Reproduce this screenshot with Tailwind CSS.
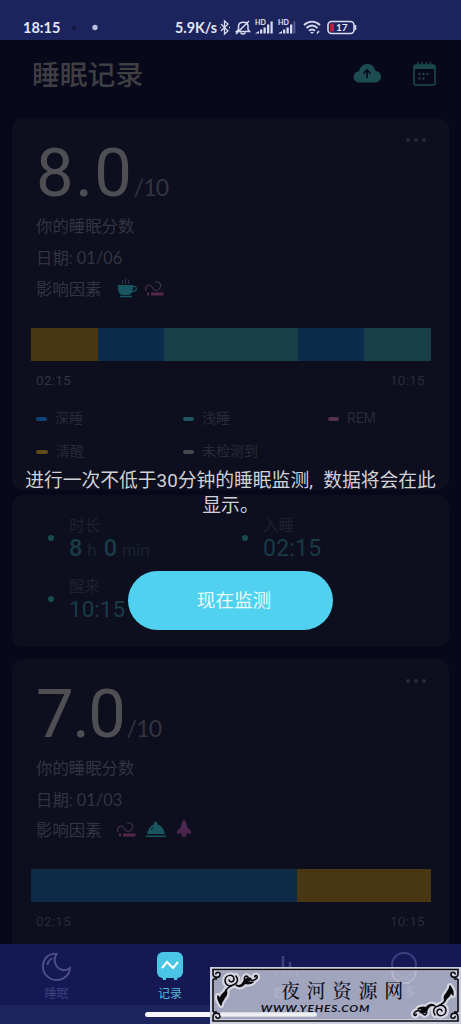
<!DOCTYPE html>
<html lang="zh-CN">
<head>
<meta charset="utf-8">
<title>睡眠记录</title>
<script src="https://cdn.jsdelivr.net/npm/@tailwindcss/browser@4"></script>
</head>
<body class="bg-[#07081a]">
<svg class="hidden">
  <defs>
    <symbol id="smoke" viewBox="0 0 20 18"><path d="M1 12C-1 7 5 4 7 8s6 5 8 1-1-7-5-6" fill="none" stroke="#40304a" stroke-width="1.2"/><path d="M6 13.5h12.500v3H6zM2 13.500h2v3H2z" fill="#55284a"/></symbol>
  </defs>
</svg>
<div class="relative flex h-[1024px] w-[461px] flex-col overflow-hidden font-['Roboto','Noto_Sans_CJK_SC',sans-serif] text-[#34343f]">

  <header class="flex h-[40px] shrink-0 items-start bg-[#1c245e] pt-[19px] pl-[23px] font-['Lato',sans-serif] font-bold text-[#e4e5f6]">
    <span class="w-[47px] text-[14.5px] leading-[18px] whitespace-nowrap">18:15</span>
    <svg class="h-[18px] w-[30px]" viewBox="0 0 30 18"><path d="M1 10.500h6L4 6z" fill="#10133c"/><circle cx="25" cy="8.500" r="2.700" fill="#b9bddc"/></svg>
    <span class="ml-[75px] w-[43px] text-[14.3px] leading-[18px] whitespace-nowrap">5.9K/s</span>
    <svg class="ml-[1px] h-[18px] w-[12px]" viewBox="0 0 12 18" fill="none" stroke="#d8daf0" stroke-width="1.300"><path d="M2 5l7 7-3.500 3V2L9 5l-7 7M1 8.500h.8M10 8.500h1"/></svg>
    <svg class="ml-[4px] h-[18px] w-[16px]" viewBox="0 0 16 18" fill="none" stroke="#d8daf0" stroke-width="1.500"><path d="M1.500 12.500h13L13 10.500V7c0-5-9-5-9.500 0v3.500zM6 13.500c0 2 4 2 4 0M1 15L14 2"/></svg>
    <div class="ml-[4px] flex h-[18px] w-[19px] flex-col"><span class="h-[6px] text-[7px] leading-[6px]">HD</span><svg class="-mt-[6px] h-[20px] w-[20px] shrink-0" viewBox="0 0 20 20" fill="#d8daf0"><path d="M0 14.500h4V12zM5 14.500h2.300v-4H5zM8.500 14.500h2.300v-6H8.500zM12 14.500h2.300v-9H12zM15.500 14.500h2.200V2.500h-2.200z"/></svg></div>
    <div class="ml-[4px] flex h-[18px] w-[19px] flex-col"><span class="h-[6px] text-[7px] leading-[6px]">HD</span><svg class="-mt-[6px] h-[20px] w-[20px] shrink-0" viewBox="0 0 20 20" fill="#d8daf0"><path d="M0 14.500h4V12zM5 14.500h2.300v-4H5zM8.500 14.500h2.300v-6H8.500zM12 14.500h2.300v-9H12z"/><path d="M15.500 14.500h1.800V2.500h-1.800z" fill="#5a6095"/></svg></div>
    <svg class="ml-[6px] h-[18px] w-[19px]" viewBox="0 0 19 18" fill="none" stroke="#d8daf0" stroke-width="2"><path d="M1 6c5-4.500 11-4.500 16 0M3.500 9c3.500-3.200 7.500-3.200 11 0M6 11.800c2-1.800 4-1.800 6 0"/><path d="M7 13l2 2 2-2z" fill="#d8daf0" stroke="none"/><path d="M14 14.500l2-2.500" stroke-width="1.500"/></svg>
    <svg class="ml-[5px] h-[18px] w-[31px]" viewBox="0 0 31 18"><rect x="1" y="2.500" width="26" height="12" rx="3.500" fill="none" stroke="#d8daf0" stroke-width="1.600"/><path d="M3 4.500h4v8H3z" fill="#b81c40"/><path d="M28.500 6v5" stroke="#d8daf0" stroke-width="1.500"/><text x="9" y="12" font-size="10" fill="#e4e5f6">17</text></svg>
  </header>

  <main class="flex h-[904px] shrink-0 flex-col px-[12px]">
    <div class="flex h-[78px] shrink-0 items-start pl-[20px]">
      <h1 class="mt-[17px] w-[321px] text-[27.8px] leading-[38px] font-medium whitespace-nowrap text-[#3e3e43]">睡眠记录</h1>
      <svg class="mt-[23px] h-[20px] w-[28px]" viewBox="0 0 28 20"><path d="M6.500 19.500C1 19.500-.5 14 1.500 11 2.500 9 4.500 8.500 6 8.500 7 3.500 10 1 14.500 1s7 3 8 7c4 .5 5.500 3 5.500 6s-2.500 5.500-6 5.500z" fill="#1c4b52"/><path d="M14 15V7M10.500 10.500L14 7l3.500 3.500" fill="none" stroke="#07081a" stroke-width="1.700"/></svg>
      <svg class="mt-[21px] ml-[31px] h-[26px] w-[25px]" viewBox="0 0 25 26"><rect x="2" y="4" width="21" height="20" rx="2" fill="none" stroke="#1c474f" stroke-width="1.600"/><path d="M2 4h21v4H2z" fill="#1c474f"/><path d="M6 1v4M10.200 1v4M14.400 1v4M18.500 1v4" stroke="#1c474f" stroke-width="1.400"/><path d="M6.500 13h12M6.500 17.500h8" stroke="#1c474f" stroke-width="2" stroke-dasharray="2 2"/></svg>
    </div>

    <section class="flex h-[372px] shrink-0 flex-col rounded-[10px] bg-[#0d0e1e] px-[19px]">
      <div class="flex h-[90px] justify-between">
        <div class="flex items-baseline pt-[17px] pl-[5px] leading-[76px]"><span class="text-[67px] leading-[76px] tracking-[1.5px] text-[#4f4f53]">8.0</span><span class="font-['Lato'] text-[23px] tracking-[-0.700px]">/10</span></div>
        <div class="mt-[20px] mr-[4px] flex gap-[4px]"><i class="size-[4px] rounded-full bg-[#292a37]"></i><i class="size-[4px] rounded-full bg-[#292a37]"></i><i class="size-[4px] rounded-full bg-[#292a37]"></i></div>
      </div>
      <div class="flex h-[120px] flex-col pl-[5px] text-[16.4px] leading-[31px]">
        <span class="mt-[3px] h-[31px]">你的睡眠分数</span>
        <span class="h-[32px]">日期: <span class="font-['Lato']">01/06</span></span>
        <div class="flex"><span class="w-[81px]">影响因素</span>
          <svg class="mt-[4px] h-[20px] w-[21px]" viewBox="0 0 21 20"><path d="M1 7h15v4c0 3-2 5-4 6H5c-3-1-4-4-4-6z" fill="#185761"/><path d="M16 8.500c5-1 4 6-1 5M3 18.500h12" fill="none" stroke="#185761" stroke-width="1.300"/><path d="M5.500 6c-1-2 1-2 0-4M8.500 5.500c-1-2 1-3 0-5M11.500 6c-1-2 1-2 0-4" stroke="#30405a" fill="none"/></svg>
          <svg class="mt-[5px] ml-[7px] h-[18px] w-[20px]"><use href="#smoke"/></svg></div>
      </div>
      <div class="flex h-[33px] w-[400px]"><i class="w-[66.500px] bg-[#493714]"></i><i class="w-[66.500px] bg-[#0c2c4b]"></i><i class="w-[133.500px] bg-[#183e48]"></i><i class="w-[66.500px] bg-[#0c2c4b]"></i><i class="grow bg-[#183e48]"></i></div>
      <div class="flex h-[41px] justify-between pt-[9px] pr-[5px] pl-[5px] text-[13.5px] leading-[20px] tracking-[0.3px]"><span>02:15</span><span class="text-[#292a37]">10:15</span></div>
      <div class="grid grid-cols-[147px_145px_1fr] grid-rows-[33px_33px] pl-[5px] text-[14px] leading-[33px] text-[#292a37]">
        <div class="flex items-center"><i class="mr-[8px] h-[4px] w-[11px] rounded-full bg-[#104474]"></i>深睡</div>
        <div class="flex items-center"><i class="mr-[8px] h-[4px] w-[11px] rounded-full bg-[#1c565f]"></i>浅睡</div>
        <div class="flex items-center"><i class="mr-[8px] h-[4px] w-[11px] rounded-full bg-[#51334b]"></i>REM</div>
        <div class="flex items-center"><i class="mr-[8px] h-[4px] w-[12px] rounded-full bg-[#624b18]"></i>清醒</div>
        <div class="flex items-center"><i class="mr-[8px] h-[4px] w-[11px] rounded-full bg-[#46484f]"></i>未检测到</div>
      </div>
    </section>

    <section class="mt-[5px] grid h-[152px] shrink-0 grid-cols-[194px_1fr] grid-rows-[61px_61px] rounded-[10px] bg-[#0d0e1e] pt-[19px] pl-[36px] text-[#183b46]">
      <div class="flex"><i class="mt-[21px] mr-[15px] size-[6px] rounded-full bg-[#184c50]"></i><div class="flex flex-col"><span class="mt-[1px] text-[15.5px] leading-[22px] text-[#202130]">时长</span><span class="flex items-baseline gap-[5px] leading-[23px]"><b class="text-[23.5px] font-medium">8</b><span class="font-['Lato'] text-[17px] text-[#19232f]">h</span><b class="ml-[2px] text-[23.5px] font-medium">0</b><span class="font-['Lato'] text-[17px] text-[#19232f]">min</span></span></div></div>
      <div class="flex"><i class="mt-[21px] mr-[15px] size-[6px] rounded-full bg-[#184c50]"></i><div class="flex flex-col"><span class="mt-[1px] text-[15.5px] leading-[22px] text-[#202130]">入睡</span><span class="text-[23px] leading-[24px] tracking-[0.2px]">02:15</span></div></div>
      <div class="flex"><i class="mt-[21px] mr-[15px] size-[6px] rounded-full bg-[#184c50]"></i><div class="flex flex-col"><span class="mt-[1px] text-[15.5px] leading-[22px] text-[#202130]">醒来</span><span class="text-[22.5px] leading-[22px]">10:15</span></div></div>
    </section>

    <section class="mt-[12px] flex h-[285px] shrink-0 flex-col rounded-t-[10px] bg-[#0d0e1e] px-[19px]">
      <div class="flex h-[90px] justify-between">
        <div class="flex items-baseline pt-[17px] pl-[5px] leading-[76px]"><span class="text-[67px] leading-[76px] tracking-[-1.5px] text-[#4f4f53]">7.0</span><span class="ml-[2px] font-['Lato'] text-[23px] tracking-[-0.700px]">/10</span></div>
        <div class="mt-[20px] mr-[4px] flex gap-[4px]"><i class="size-[4px] rounded-full bg-[#292a37]"></i><i class="size-[4px] rounded-full bg-[#292a37]"></i><i class="size-[4px] rounded-full bg-[#292a37]"></i></div>
      </div>
      <div class="flex h-[120px] flex-col pl-[5px] text-[16.4px] leading-[31px]">
        <span class="mt-[4px] h-[31px]">你的睡眠分数</span>
        <span class="h-[31px]">日期: <span class="font-['Lato']">01/03</span></span>
        <div class="flex"><span class="w-[81px]">影响因素</span>
          <svg class="mt-[5px] h-[18px] w-[20px]"><use href="#smoke"/></svg>
          <svg class="mt-[4px] ml-[9px] h-[19px] w-[20px]" viewBox="0 0 20 19"><path d="M1 15C2 10 5 6 8 5.500c-1-4 4-4 3.500 0C15 6 18 10 19 15zM0 16.500h20V18H0z" fill="#18555e"/><path d="M5 11l2-2.500" stroke="#0d0e1e"/></svg>
          <svg class="mt-[4px] ml-[10px] h-[20px] w-[16px]" viewBox="0 0 16 20"><path d="M8 0c2 2 3 5 3 8l4 4v3l-4-1-.5 1L10 19l-2-2-2 2-.5-4-.5-1-4 1v-3l4-4C5 5 6 2 8 0z" fill="#4b264c"/></svg></div>
      </div>
      <div class="flex h-[33px] w-[400px]"><i class="w-[266px] bg-[#0e2c47]"></i><i class="grow bg-[#493714]"></i></div>
      <div class="flex justify-between pt-[9px] pr-[5px] pl-[5px] text-[13.5px] leading-[20px] tracking-[0.3px] text-[#292a37]"><span>02:15</span><span>10:15</span></div>
    </section>
  </main>

  <nav class="grid h-[61px] shrink-0 grid-cols-[113px_114px_120px_114px] bg-[#141853] text-[12px] leading-[18px] text-[#3c4080]">
    <div class="flex flex-col items-center pt-[8px]"><svg class="h-[30px] w-[30px]" viewBox="0 0 30 30" fill="none" stroke="#4e5187" stroke-width="1.900"><path d="M14.500 2C5 1 1 8 1 15c0 7 6 13 14 13 7 0 13-6 13-12-5 4-11 2-13.500-2S12 6 14.500 2zM5.500 13c.5-4 3-6 5-7"/></svg><span class="mt-[3px]">睡眠</span></div>
    <div class="flex flex-col items-center pt-[7px] text-[#55b7dc]"><svg class="h-[31px] w-[28px]" viewBox="0 0 28 31"><rect x="1" y="1" width="26" height="26" rx="6" fill="#4bc5e5"/><path d="M6 25h4v4H7zM18 25h4l-1 4h-3z" fill="#4bc5e5"/><path d="M6 17l5-6 6 6 5-6" fill="none" stroke="#fff" stroke-width="2"/></svg><span class="mt-[3px]">记录</span></div>
    <div class="flex flex-col items-center pt-[9px]"><svg class="h-[28px] w-[28px]" viewBox="0 0 28 28"><path d="M3 24v-8M10 24V3M17 24V9M24 24v-9" stroke="#3c4080" stroke-width="2.500"/></svg><span class="mt-[3px] mr-[4px] text-[#8f92c8]">趋势</span></div>
    <div class="flex flex-col items-center pt-[7px]"><svg class="h-[30px] w-[30px]" viewBox="0 0 30 30" fill="none" stroke="#3c4080" stroke-width="2"><circle cx="15" cy="14" r="12"/><path d="M9 28h12"/></svg><span class="mt-[3px] text-[#8f92c8]">更多</span></div>
  </nav>
  <footer class="flex h-[19px] shrink-0 justify-center bg-[#1c245e] pt-[7px]"><i class="h-[5px] w-[171px] rounded-full bg-[#f5f5fa]"></i></footer>

  <div class="absolute top-[469px] left-0 flex w-full flex-col items-center text-[#d1d1d7]">
    <p class="text-center text-[18.8px] leading-[25px] whitespace-nowrap">进行一次不低于30分钟的睡眠监测<span class="inline-block w-[14px] text-left">,</span>数据将会在此<br>显示。</p>
    <button class="mt-[52px] h-[59px] w-[205px] rounded-full bg-[#4fd1ef] pt-[3px] pl-[7px] text-[18.6px] text-[#e9fcff]">现在监测</button>
  </div>

  <aside class="absolute top-[967px] left-[210px] h-[57px] w-[251px] text-[#101018]">
    <svg class="absolute inset-0" width="251" height="57" viewBox="0 0 251 57">
      <defs>
        <g id="scroll" stroke-linecap="round" stroke-linejoin="round">
          <path d="M11 38c-1-3-4-4-3-9 1 2 2 2 3 1 0-3 4-3 5-7 2 5-1 7-2 8 0 2-3 3-3 7zM26 18c4 2 7-1 8-4 2-3 5-4 7-2-1 2-3 2-4 2 2 2 4 1 6 1-2 2-6 2-8 1-2 3-6 5-9 2z"/>
          <path d="M19 13c1 3 5 2 5-1 0-5-8-5-9 1 0 5 4 7 8 5 4-1 6-5 3-9M23 18c-3 2-6 2-7 6M41 13c4 1 7-2 6-4-1-1-3 0-2 1M35 14c-2-4 1-6 3-4" fill="none"/>
        </g>
      </defs>
      <path fill-rule="evenodd" d="M0 0h251v57H0zM10 4v5H4v37h6v6h231v-6h6V9h-6V4z" fill="#cccddd"/>
      <path d="M10 4h231v5h6v37h-6v6H10v-6H4V9h6z" fill="#b5b7cc" fill-opacity=".88"/>
      <use href="#scroll" fill="#d5d6e1" stroke="#d5d6e1" stroke-width="6"/><use href="#scroll" fill="#08080c" stroke="#08080c" stroke-width="1.500"/>
      <g transform="rotate(180 125.500 28.500)"><use href="#scroll" fill="#d5d6e1" stroke="#d5d6e1" stroke-width="6"/><use href="#scroll" fill="#08080c" stroke="#08080c" stroke-width="1.500"/></g>
      <path d="M9 2.500h233M9 2.500H3v4c0 5 7 5 7 1s-5-2-4 0M242 2.500h6v4c0 5-7 5-7 1s5-2 4 0M3 12v33M248 12v33M3 12h4M248 12h-4M3 45h4M248 45h-4M9 54H3v-4c0-5 7-5 7-1s-5 2-4 0M242 54h6v-4c0-5-7-5-7-1s5 2 4 0M9 54h233" fill="none" stroke="#08080c" stroke-width="1.600"/>
      <path d="M12 47.500h93" stroke="#fff" stroke-width="4" stroke-linecap="round" opacity=".75"/>
      <path d="M182 4a12 12 0 0 0 24 0M188 16h12" fill="none" stroke="#c4c5da" stroke-width="1.800" opacity=".6"/>
    </svg>
    <div class="relative flex h-full flex-col">
      <span class="pt-[11px] pl-[71px] font-['Noto_Serif_CJK_SC','Noto_Sans_CJK_SC',serif] text-[19px] leading-[24px] font-medium tracking-[6.800px] whitespace-nowrap">夜河资源网</span>
      <span class="origin-left scale-x-[1.18] pl-[43px] font-['Lato',sans-serif] text-[10px] leading-[12px] font-bold tracking-[0.700px] whitespace-nowrap italic">WWW.YEHES.COM</span>
    </div>
  </aside>
</div>
</body>
</html>
